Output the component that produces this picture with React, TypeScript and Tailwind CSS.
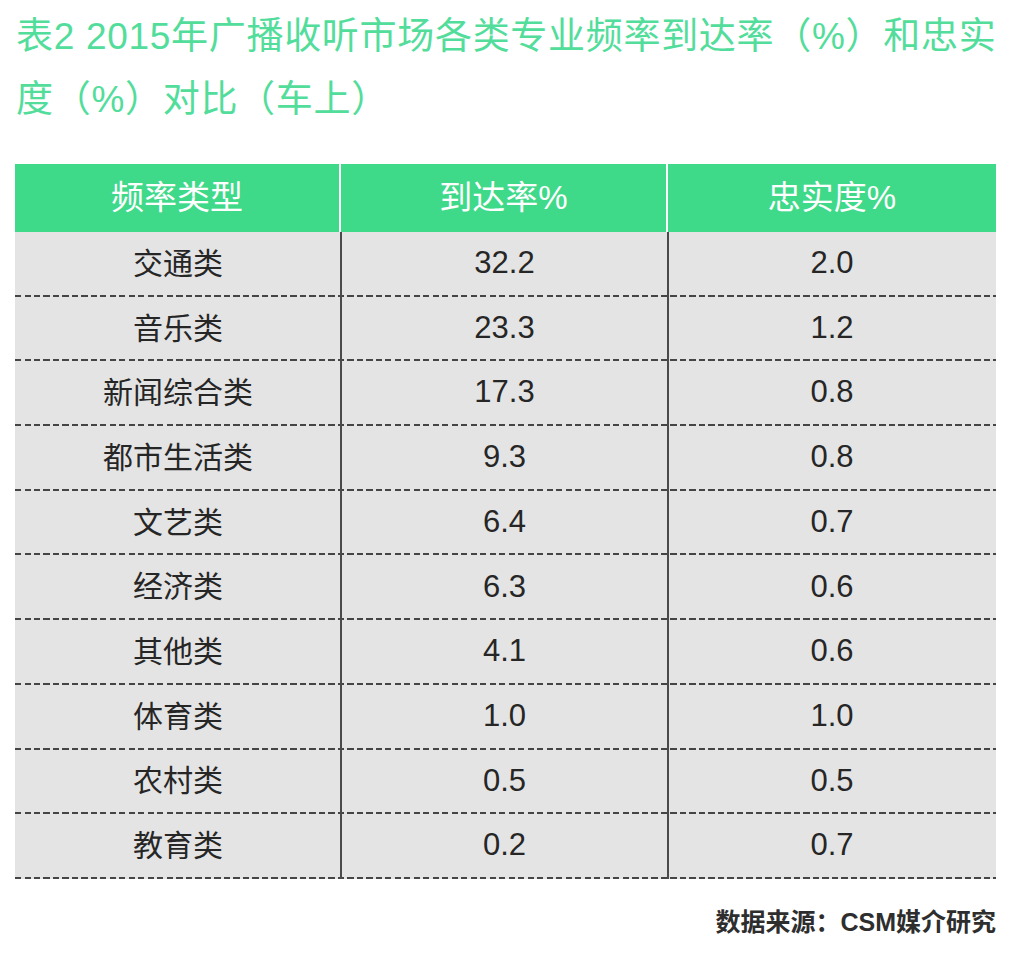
const rows: [string, string, string][] = [
  ['交通类', '32.2', '2.0'],
  ['音乐类', '23.3', '1.2'],
  ['新闻综合类', '17.3', '0.8'],
  ['都市生活类', '9.3', '0.8'],
  ['文艺类', '6.4', '0.7'],
  ['经济类', '6.3', '0.6'],
  ['其他类', '4.1', '0.6'],
  ['体育类', '1.0', '1.0'],
  ['农村类', '0.5', '0.5'],
  ['教育类', '0.2', '0.7'],
]

const font = "font-['Liberation_Sans','Noto_Sans_CJK_SC',sans-serif]"

function DashedRule() {
  return (
    <div className="h-[2px] w-full bg-[repeating-linear-gradient(90deg,#454545_0px,#454545_6px,transparent_6px,transparent_9.5px)]" />
  )
}

export default function App() {
  return (
    <div className={`${font} relative h-[968px] w-[1032px] bg-white`}>
      <h1 className="pl-[16px] pt-[5px] text-[37px] leading-[63px] font-normal tracking-[0.7px] text-[#52dd9b]">
        <span className="block whitespace-nowrap">表2 2015年广播收听市场各类专业频率到达率（%）和忠实</span>
        <span className="block whitespace-nowrap">度（%）对比（车上）</span>
      </h1>

      <div className="ml-[15px] mt-[33px] w-[981px]">
        <div className="grid h-[68px] grid-cols-[326px_327px_328px] bg-[#3fd98a] text-[33px] text-white">
          <div className="flex items-center justify-center border-r-2 border-white">频率类型</div>
          <div className="flex items-center justify-center border-r-2 border-white">到达率%</div>
          <div className="flex items-center justify-center">忠实度%</div>
        </div>
        <div className="relative bg-[#e4e4e4]">
          {rows.map(([name, reach, loyalty]) => (
            <div key={name}>
              <div className="grid h-[62.7px] grid-cols-[326px_327px_328px] text-[#262626]">
                <div className="flex items-center justify-center text-[30px]">{name}</div>
                <div className="flex items-center justify-center text-[31px]">{reach}</div>
                <div className="flex items-center justify-center text-[31px]">{loyalty}</div>
              </div>
              <DashedRule />
            </div>
          ))}
          <div className="absolute top-0 bottom-0 left-[325px] w-[2px] bg-[#4a4a4a]" />
          <div className="absolute top-0 bottom-0 left-[652px] w-[2px] bg-[#4a4a4a]" />
        </div>
      </div>

      <p className="mt-[25px] mr-[36px] text-right text-[25px] font-semibold text-[#2e2e2e]">数据来源：CSM媒介研究</p>
    </div>
  )
}
